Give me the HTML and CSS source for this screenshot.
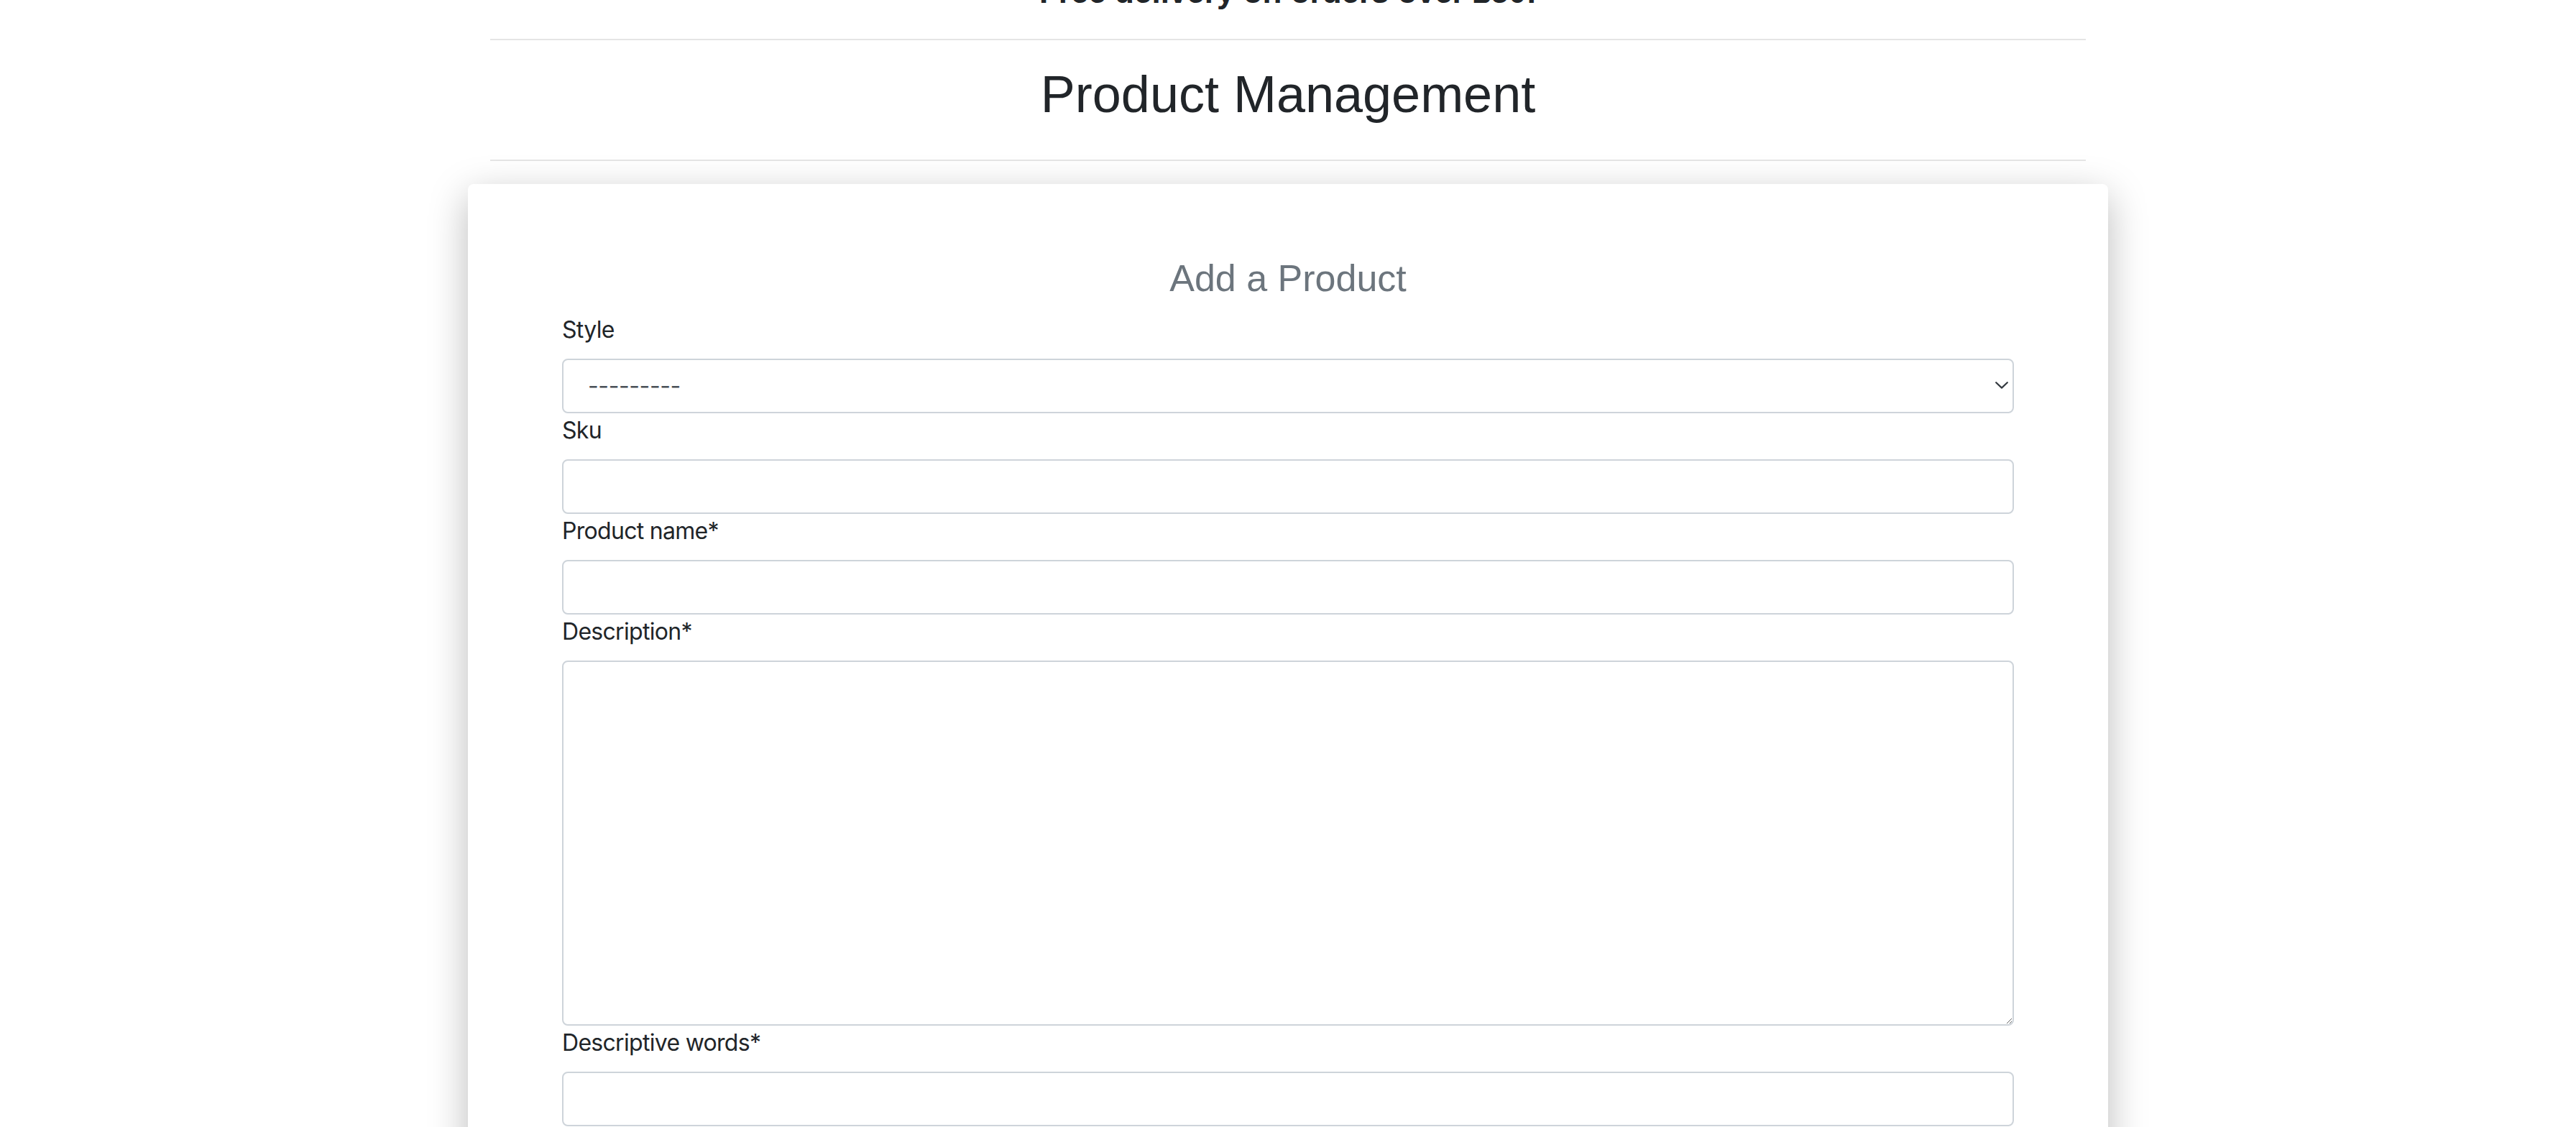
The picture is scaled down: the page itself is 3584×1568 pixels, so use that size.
FILE: index.html
```html
<!DOCTYPE html>
<html lang="en">
<head>
<meta charset="utf-8">
<title>Product Management</title>
<link rel="stylesheet" href="styles.css">
</head>
<body>
<header class="site-header">
  <p class="promo">Free delivery on orders over £50!</p>
</header>
<main class="container">
  <hr class="rule rule-top">
  <h1 class="page-title">Product Management</h1>
  <hr class="rule">
  <section class="card">
    <h2 class="card-title">Add a Product</h2>
    <form class="product-form">
      <div class="field">
        <label class="field-label" for="id_style">Style</label>
        <div class="select-wrap">
          <select id="id_style" class="control select-control">
            <option>---------</option>
          </select>
          <svg class="chevron" width="18" height="10" viewBox="0 0 18 10" aria-hidden="true">
            <path d="M1.2 1.2 L9 8.6 L16.8 1.2" fill="none" stroke="#343a40" stroke-width="2.2" stroke-linecap="round" stroke-linejoin="round"/>
          </svg>
        </div>
      </div>
      <div class="field">
        <label class="field-label" for="id_sku">Sku</label>
        <input id="id_sku" class="control" type="text">
      </div>
      <div class="field">
        <label class="field-label" for="id_name">Product name*</label>
        <input id="id_name" class="control" type="text">
      </div>
      <div class="field">
        <label class="field-label" for="id_description">Description*</label>
        <textarea id="id_description" class="control textarea-control"></textarea>
      </div>
      <div class="field">
        <label class="field-label" for="id_words">Descriptive words*</label>
        <input id="id_words" class="control" type="text">
      </div>
    </form>
  </section>
</main>
</body>
</html>
```

FILE: styles.css
```css
html, body {
  margin: 0;
  padding: 0;
  background: #ffffff;
}

body {
  font-family: Inter, "Noto Sans", sans-serif;
  color: #212529;
}

.site-header {
  margin-top: -38px;
  text-align: center;
}

.promo {
  margin: 0;
  font-family: "Liberation Sans", Arial, sans-serif;
  font-weight: 700;
  font-size: 44px;
  line-height: 53px;
  color: #212529;
}

.container {
  width: 2220px;
  margin: 0 auto;
  display: flex;
  flex-direction: column;
}

.rule {
  border: 0;
  height: 2px;
  background: rgba(0, 0, 0, 0.1);
  margin: 32px 0;
}

.rule-top {
  margin-top: 39px;
}

.page-title {
  margin: 0 0 16px;
  text-align: center;
  font-family: "Liberation Sans", Arial, sans-serif;
  font-weight: 400;
  font-size: 72px;
  line-height: 1.2;
  color: #212529;
}

.card {
  margin: 0 -31px;
  background: #ffffff;
  border-radius: 8px;
  box-shadow: 0 16px 54px rgba(0, 0, 0, 0.27);
  padding: 100px 131px 120px;
}

.card-title {
  margin: 0 0 16px;
  text-align: center;
  font-family: "Liberation Sans", Arial, sans-serif;
  font-weight: 400;
  font-size: 52px;
  line-height: 1.2;
  color: #6c757d;
}

.product-form {
  display: flex;
  flex-direction: column;
}

.field {
  display: flex;
  flex-direction: column;
}

.field-label {
  font-size: 32px;
  line-height: 48px;
  letter-spacing: -0.7px;
  margin-bottom: 16px;
  color: #212529;
}

.control {
  box-sizing: border-box;
  width: 100%;
  height: 76px;
  margin: 0;
  border: 2px solid #ced4da;
  border-radius: 8px;
  background: #ffffff;
  font-family: Inter, "Noto Sans", sans-serif;
  font-size: 32px;
  color: #495057;
  padding: 12px 24px;
  outline: none;
}

.select-wrap {
  position: relative;
}

.select-control {
  appearance: none;
  -webkit-appearance: none;
  padding-left: 34px;
  letter-spacing: -0.4px;
}

.chevron {
  position: absolute;
  right: 8px;
  top: 32px;
  pointer-events: none;
}

.textarea-control {
  height: 508px;
  resize: vertical;
}
```
